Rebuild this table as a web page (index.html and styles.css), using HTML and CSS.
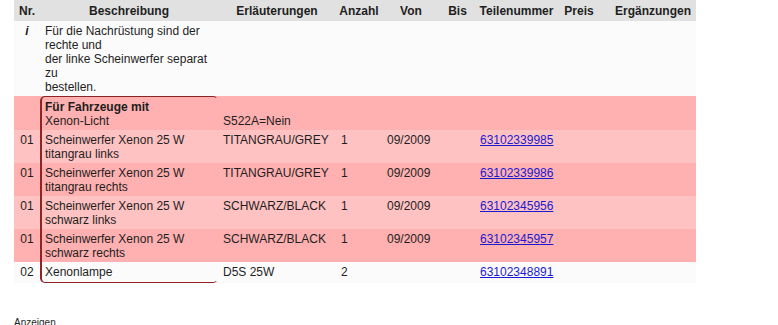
FILE: index.html
```html
<!DOCTYPE html>
<html lang="de">
<head>
<meta charset="utf-8">
<title>Teile</title>
<link rel="stylesheet" href="styles.css">
</head>
<body>
<div class="page">
  <div class="parts">
    <table class="grid">
      <colgroup>
        <col class="c-nr"><col class="c-desc"><col class="c-note"><col class="c-qty"><col class="c-from"><col class="c-to"><col class="c-part"><col class="c-price"><col class="c-extra">
      </colgroup>
      <thead>
        <tr>
          <th>Nr.</th><th>Beschreibung</th><th>Erläuterungen</th><th>Anzahl</th><th>Von</th><th>Bis</th><th>Teilenummer</th><th>Preis</th><th class="th-extra">Ergänzungen</th>
        </tr>
      </thead>
      <tbody>
        <tr class="info">
          <td class="nr"><b><i>i</i></b></td>
          <td>Für die Nachrüstung sind der<br>rechte und<br>der linke Scheinwerfer separat<br>zu<br>bestellen.</td>
          <td></td><td></td><td></td><td></td><td></td><td></td><td></td>
        </tr>
        <tr class="dark group">
          <td class="nr"></td>
          <td><b>Für Fahrzeuge mit</b><br>Xenon-Licht</td>
          <td class="bottom">S522A=Nein</td>
          <td></td><td></td><td></td><td></td><td></td><td></td>
        </tr>
        <tr class="light">
          <td class="nr">01</td>
          <td>Scheinwerfer Xenon 25 W<br>titangrau links</td>
          <td>TITANGRAU/GREY</td><td>1</td><td>09/2009</td><td></td>
          <td><a href="#">63102339985</a></td><td></td><td></td>
        </tr>
        <tr class="dark">
          <td class="nr">01</td>
          <td>Scheinwerfer Xenon 25 W<br>titangrau rechts</td>
          <td>TITANGRAU/GREY</td><td>1</td><td>09/2009</td><td></td>
          <td><a href="#">63102339986</a></td><td></td><td></td>
        </tr>
        <tr class="light">
          <td class="nr">01</td>
          <td>Scheinwerfer Xenon 25 W<br>schwarz links</td>
          <td>SCHWARZ/BLACK</td><td>1</td><td>09/2009</td><td></td>
          <td><a href="#">63102345956</a></td><td></td><td></td>
        </tr>
        <tr class="dark">
          <td class="nr">01</td>
          <td>Scheinwerfer Xenon 25 W<br>schwarz rechts</td>
          <td>SCHWARZ/BLACK</td><td>1</td><td>09/2009</td><td></td>
          <td><a href="#">63102345957</a></td><td></td><td></td>
        </tr>
        <tr class="plain">
          <td class="nr">02</td>
          <td>Xenonlampe</td>
          <td>D5S 25W</td><td>2</td><td></td><td></td>
          <td><a href="#">63102348891</a></td><td></td><td></td>
        </tr>
      </tbody>
    </table>
    <div class="highlight"></div>
  </div>
  <p class="footer">Anzeigen</p>
</div>
</body>
</html>
```

FILE: styles.css
```css
html, body {
  margin: 0;
  padding: 0;
  background: #ffffff;
}

body {
  font-family: "Liberation Sans", Arial, sans-serif;
  font-size: 12px;
  line-height: 14px;
  color: #1e1e1e;
}

.page {
  padding-left: 14px;
}

.parts {
  position: relative;
  width: 682px;
}

.grid {
  width: 682px;
  table-layout: fixed;
  border-collapse: collapse;
  border-spacing: 0;
}

.c-nr { width: 26px; }
.c-desc { width: 178px; }
.c-note { width: 118px; }
.c-qty { width: 46px; }
.c-from { width: 58px; }
.c-to { width: 35px; }
.c-part { width: 83px; }
.c-price { width: 42px; }
.c-extra { width: 96px; }

.grid th {
  background: #e1e1e1;
  font-weight: bold;
  text-align: center;
  padding: 4px 0 3px;
  white-space: nowrap;
}

.grid th.th-extra {
  padding-left: 10px;
}

.grid td {
  padding: 3px 5px 2px;
  vertical-align: top;
  text-align: left;
  white-space: nowrap;
}

.grid td.nr {
  text-align: center;
  padding-left: 0;
  padding-right: 0;
}

.grid td.bottom {
  vertical-align: bottom;
}

.info td {
  background: #fbfbfb;
}

.dark td {
  background: #ffb0b0;
}

.light td {
  background: #ffc2c2;
}

.group td {
  padding-top: 4px;
}

.plain td {
  background: #fbfbfb;
  padding-bottom: 4px;
}

.grid a {
  color: #1a1ad0;
  text-decoration: underline;
}

.highlight {
  position: absolute;
  left: 26px;
  top: 96px;
  width: 175px;
  height: 185px;
  border: 1px solid #8e2424;
  border-left-width: 2px;
  border-right-color: transparent;
  border-radius: 5px;
  pointer-events: none;
}

.footer {
  margin: 34px 0 0;
  font-size: 10px;
  line-height: 12px;
  color: #1e1e1e;
}
```
